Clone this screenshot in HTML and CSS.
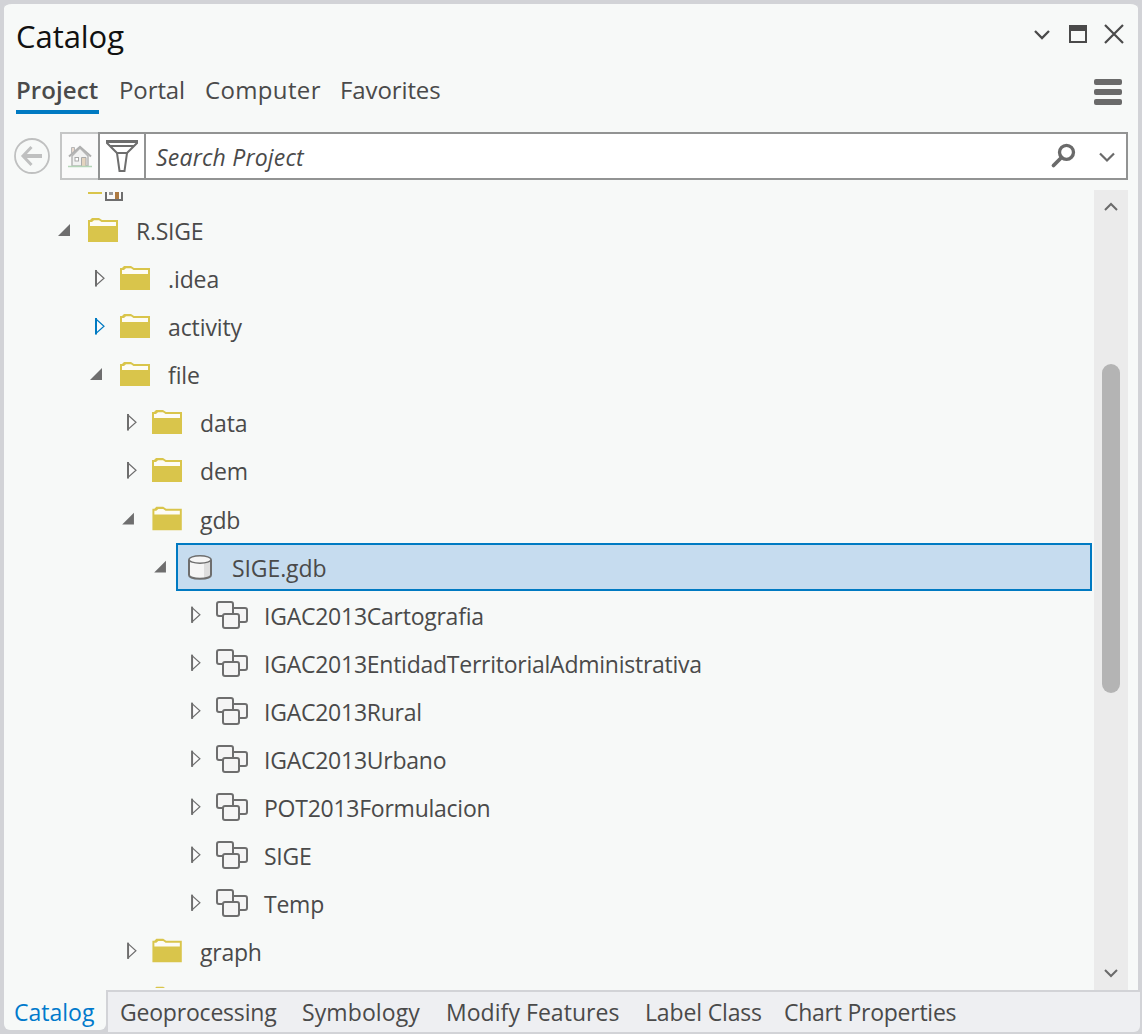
FILE: index.html
```
<!DOCTYPE html>
<html lang="en">
<head>
<meta charset="utf-8">
<title>Catalog</title>
<link rel="stylesheet" href="styles.css">
</head>
<body>
<svg class="defs" width="0" height="0">
  <symbol id="open" viewBox="0 0 24 48"><path d="M14 17v12H2z" fill="#6e6e6e"/></symbol>
  <symbol id="closed" viewBox="0 0 24 48"><path d="M8.200 16.200L16 23.200 8.200 30.200z" fill="#fbfbfb" stroke="currentColor" stroke-width="1.200"/><path d="M8 15v16.500" stroke="currentColor" stroke-width="2"/></symbol>
  <symbol id="folder" viewBox="0 0 56 48"><path d="M8 13h2l2-2h7l3 2h16v22H8z" fill="#d9c54b"/><path d="M10 15h2l2-1.800h5l2.500 1.800H36v4H10z" fill="#fdfcf5"/></symbol>
  <symbol id="database" viewBox="0 0 56 48"><path d="M13 16v16c0 5 22 5 22 0V16z" fill="#f5f5f5"/><path d="M28 20h7v12q-1 3-7 3z" fill="#dedede"/><path d="M13 16.500v15.500c0 5 22 5 22 0V16.500" fill="none" stroke="#6e6e6e" stroke-width="2"/><ellipse cx="24" cy="16.500" rx="11" ry="3.700" fill="#f5f5f5" stroke="#6e6e6e" stroke-width="1.500"/></symbol>
  <symbol id="dataset" viewBox="0 0 56 48"><g fill="#f5f5f5" stroke="#6e6e6e" stroke-width="2"><rect x="22" y="17" width="17" height="14" rx="2"/><rect x="9" y="11" width="16" height="14" rx="2"/><rect x="15" y="23" width="16" height="14" rx="2"/></g></symbol>
</svg>
<main class="pane">
  <header class="titlebar">
    <h1 class="title">Catalog</h1>
    <svg class="window-buttons" width="100" height="40" viewBox="0 0 100 40" fill="none" stroke="#4a4a4a">
      <path d="M7 17l7 7 7-7" stroke-width="2.300"/>
      <path d="M42 12h16v16H42z" stroke-width="2"/><path d="M41 14h18" stroke-width="6"/>
      <path d="M77 11l18 18M95 11L77 29" stroke-width="2.200"/>
    </svg>
  </header>
  <nav class="views">
    <a class="view current">Project</a>
    <a class="view portal">Portal</a>
    <a class="view computer">Computer</a>
    <a class="view favorites">Favorites</a>
    <svg class="menu" width="28" height="28" viewBox="0 0 28 28" fill="#6a6a6a"><rect y="1" width="28" height="6" rx="2"/><rect y="11" width="28" height="6" rx="2"/><rect y="21" width="28" height="6" rx="2"/></svg>
  </nav>
  <div class="searchbar">
    <svg class="back" width="36" height="36" viewBox="0 0 36 36" fill="none" stroke="#bfc0c0"><circle cx="18" cy="18" r="17" stroke-width="1.800"/><path d="M28 18H10" stroke-width="4"/><path d="M17.500 9l-8.500 9 8.500 9" stroke-width="3"/></svg>
    <div class="home">
      <svg width="24" height="24" viewBox="0 0 24 24"><path d="M4 11l8-8 8 8v10H4z" fill="#f2f2f2" stroke="#b7b7b7" stroke-width="1.500"/><path d="M3.500 8V2.500h3V6" fill="#e9d9cf" stroke="#b7b7b7"/><path d="M1 11.500L12 1.800l11 9.700" fill="none" stroke="#b0b0b0" stroke-width="2"/><rect x="7" y="12.500" width="3.500" height="3.500" fill="#fff" stroke="#aaa"/><path d="M13.500 21v-8.500H18V21" fill="#e4d4bf" stroke="#aaa"/><path d="M0 21.500h24" stroke="#b5d5b8" stroke-width="1.500"/></svg>
    </div>
    <div class="filter">
      <svg width="32" height="32" viewBox="0 0 32 32" fill="none" stroke="#6e6e6e" stroke-width="2"><path d="M1 1h30v2L21 13l-2.500 18h-5L11 13 1 3z"/><path d="M1 2h30M4 6h24M10 13h12"/></svg>
    </div>
    <div class="search">
      <span class="placeholder">Search Project</span>
      <svg class="search-icons" width="80" height="44" viewBox="0 0 80 44" fill="none" stroke="#6a6a6a"><circle cx="20.500" cy="18.300" r="7" stroke-width="3.300"/><path d="M15.500 23.500L7.500 31.500" stroke-width="3.800" stroke-linecap="round"/><path d="M54 19.500l7 7 7-7" stroke-width="2.200"/></svg>
    </div>
  </div>
  <section class="browser">
    <div class="tree">
      <div class="row first"><svg class="partial" width="56" height="48" viewBox="0 0 56 48"><path d="M8 34h14" stroke="#d9c54b" stroke-width="2"/><path d="M26 30v11h16V30" fill="#fafafa" stroke="#6e6e6e" stroke-width="2"/><path d="M29 30h4v6h-4z" fill="#999"/><path d="M35 30h4v10h-4z" fill="#ad7a42"/></svg></div>
      <div class="row"><svg class="toggle"><use href="#open"/></svg><div class="item"><svg class="icon"><use href="#folder"/></svg><span class="label tight">R.SIGE</span></div></div>
      <div class="row l1"><svg class="toggle"><use href="#closed"/></svg><div class="item"><svg class="icon"><use href="#folder"/></svg><span class="label">.idea</span></div></div>
      <div class="row l1"><svg class="toggle hot"><use href="#closed"/></svg><div class="item"><svg class="icon"><use href="#folder"/></svg><span class="label">activity</span></div></div>
      <div class="row l1"><svg class="toggle"><use href="#open"/></svg><div class="item"><svg class="icon"><use href="#folder"/></svg><span class="label">file</span></div></div>
      <div class="row l2"><svg class="toggle"><use href="#closed"/></svg><div class="item"><svg class="icon"><use href="#folder"/></svg><span class="label">data</span></div></div>
      <div class="row l2"><svg class="toggle"><use href="#closed"/></svg><div class="item"><svg class="icon"><use href="#folder"/></svg><span class="label">dem</span></div></div>
      <div class="row l2 low"><svg class="toggle"><use href="#open"/></svg><div class="item"><svg class="icon"><use href="#folder"/></svg><span class="label">gdb</span></div></div>
      <div class="row l3 low"><svg class="toggle"><use href="#open"/></svg><div class="item selected"><svg class="icon data"><use href="#database"/></svg><span class="label">SIGE.gdb</span></div></div>
      <div class="row l4 low"><svg class="toggle"><use href="#closed"/></svg><div class="item"><svg class="icon data"><use href="#dataset"/></svg><span class="label tight">IGAC2013Cartografia</span></div></div>
      <div class="row l4 low"><svg class="toggle"><use href="#closed"/></svg><div class="item"><svg class="icon data"><use href="#dataset"/></svg><span class="label tight">IGAC2013EntidadTerritorialAdministrativa</span></div></div>
      <div class="row l4 low"><svg class="toggle"><use href="#closed"/></svg><div class="item"><svg class="icon data"><use href="#dataset"/></svg><span class="label tight">IGAC2013Rural</span></div></div>
      <div class="row l4 low"><svg class="toggle"><use href="#closed"/></svg><div class="item"><svg class="icon data"><use href="#dataset"/></svg><span class="label tight">IGAC2013Urbano</span></div></div>
      <div class="row l4 low"><svg class="toggle"><use href="#closed"/></svg><div class="item"><svg class="icon data"><use href="#dataset"/></svg><span class="label tight">POT2013Formulacion</span></div></div>
      <div class="row l4 low"><svg class="toggle"><use href="#closed"/></svg><div class="item"><svg class="icon data"><use href="#dataset"/></svg><span class="label tight">SIGE</span></div></div>
      <div class="row l4 low"><svg class="toggle"><use href="#closed"/></svg><div class="item"><svg class="icon data"><use href="#dataset"/></svg><span class="label tight">Temp</span></div></div>
      <div class="row l2 low"><svg class="toggle"><use href="#closed"/></svg><div class="item"><svg class="icon"><use href="#folder"/></svg><span class="label tight">graph</span></div></div>
      <div class="row l2 low"><svg class="toggle"></svg><div class="item"><svg class="icon"><use href="#folder"/></svg></div></div>
    </div>
    <div class="scrollbar">
      <svg width="34" height="34" viewBox="0 0 34 34" fill="none" stroke="#6a6a6a" stroke-width="2"><path d="M11 20l6-6 6 6"/></svg>
      <div class="thumb"></div>
      <svg class="down" width="34" height="34" viewBox="0 0 34 34" fill="none" stroke="#6a6a6a" stroke-width="2"><path d="M11 14l6 6 6-6"/></svg>
    </div>
  </section>
</main>
<footer class="tabs">
  <a class="tab active">Catalog</a>
  <div class="others">
    <a class="tab geo">Geoprocessing</a>
    <a class="tab sym">Symbology</a>
    <a class="tab mod">Modify Features</a>
    <a class="tab lab">Label Class</a>
    <a class="tab cha">Chart Properties</a>
  </div>
</footer>
</body>
</html>
```
FILE: styles.css
```
* { box-sizing: border-box; }
body {
  margin: 0;
  width: 1142px;
  height: 1034px;
  display: flex;
  flex-direction: column;
  overflow: hidden;
  background: #d2d3d7;
  color: #4a4a4a;
  font: 23px/32px "Open Sans", "Noto Sans", sans-serif;
}
svg { display: block; flex: none; }
.defs { display: none; }
.pane {
  height: 990px;
  margin: 0 4px;
  border-top: 4px solid #d2d3d7;
  background: #f7f9f8;
  border-radius: 8px 8px 0 0;
}
.titlebar { display: flex; justify-content: space-between; height: 64px; padding: 10px 10px 0 12px; }
.title { margin: -1px 0 0; font-size: 31px; line-height: 46px; font-weight: 400; color: #111; letter-spacing: -0.05px; }
.views { display: flex; height: 46px; padding: 0 12px; }
.view { height: 46px; line-height: 44px; font-size: 24px; white-space: nowrap; }
.current { width: 83px; margin-right: 20px; font-weight: 600; border-bottom: 4px solid #007ac2; letter-spacing: 0.1px; }
.portal { width: 86px; letter-spacing: -0.1px; }
.computer { width: 135px; letter-spacing: 0.35px; }
.favorites { letter-spacing: -0.1px; }
.menu { margin: 10px 4px 0 auto; }
.searchbar { display: flex; align-items: center; height: 48px; margin: 18px 10px 0; }
.home { display: flex; align-items: center; justify-content: center; width: 38px; height: 48px; margin-left: 10px; border: 2px solid #c5c6c6; border-right: 0; background: #fafafa; }
.home svg { margin-top: 2px; }
.filter { display: flex; align-items: center; justify-content: center; width: 48px; height: 48px; border: 2px solid #929393; background: #fff; }
.search { display: flex; flex: 1; align-items: center; justify-content: space-between; height: 48px; border: 2px solid #929393; border-left: 0; padding-left: 10px; background: #fff; }
.placeholder { padding-top: 2px; font-style: italic; letter-spacing: 0.2px; white-space: nowrap; }
.browser { display: flex; height: 800px; margin-top: 10px; padding-right: 10px; }
.tree { flex: 1; height: 796px; margin: 2px 2px 0 0; padding-left: 52px; overflow: hidden; }
.row { display: flex; height: 48px; }
.first { margin-top: -33px; padding-left: 24px; }
.l1 { padding-left: 32px; }
.l2 { padding-left: 64px; }
.l3 { padding-left: 96px; }
.l4 { padding-left: 128px; }
.toggle { width: 24px; height: 48px; color: #6e6e6e; }
.hot { color: #007ac2; }
.item { display: flex; flex: 1; align-items: center; }
.selected { background: #c6dcef; box-shadow: inset 0 0 0 2px #007ac2; }
.icon { width: 56px; height: 48px; }
.low .toggle, .low .icon { padding-top: 1px; }
.low .data { padding-top: 0; }
.label { white-space: nowrap; letter-spacing: -0.1px; }
.low .label { padding-top: 2px; }
.tight { letter-spacing: -0.25px; }
.scrollbar { display: flex; flex-direction: column; width: 34px; background: #ebebeb; }
.thumb { width: 18px; height: 329px; margin: 140px 8px 0; border-radius: 9px; background: #b4b4b4; }
.down { margin-top: auto; }
.tabs { display: flex; height: 44px; padding: 0 2px 2px 4px; }
.tab { white-space: nowrap; line-height: 40px; font-size: 23px; }
.active { width: 102px; height: 40px; padding-left: 10px; line-height: 44px; color: #007acc; background: #f7f9f8; border-radius: 0 0 6px 6px; }
.others { display: flex; flex: 1; height: 40px; margin: 2px 0 0 2px; padding-left: 12px; background: #eeeff2; border-radius: 0 0 6px 0; }
.geo { width: 182px; letter-spacing: -0.2px; }
.sym { width: 144px; letter-spacing: 0.1px; }
.mod { width: 199px; letter-spacing: 0.05px; }
.lab { width: 139px; letter-spacing: -0.15px; }
.cha { letter-spacing: -0.25px; }
```
